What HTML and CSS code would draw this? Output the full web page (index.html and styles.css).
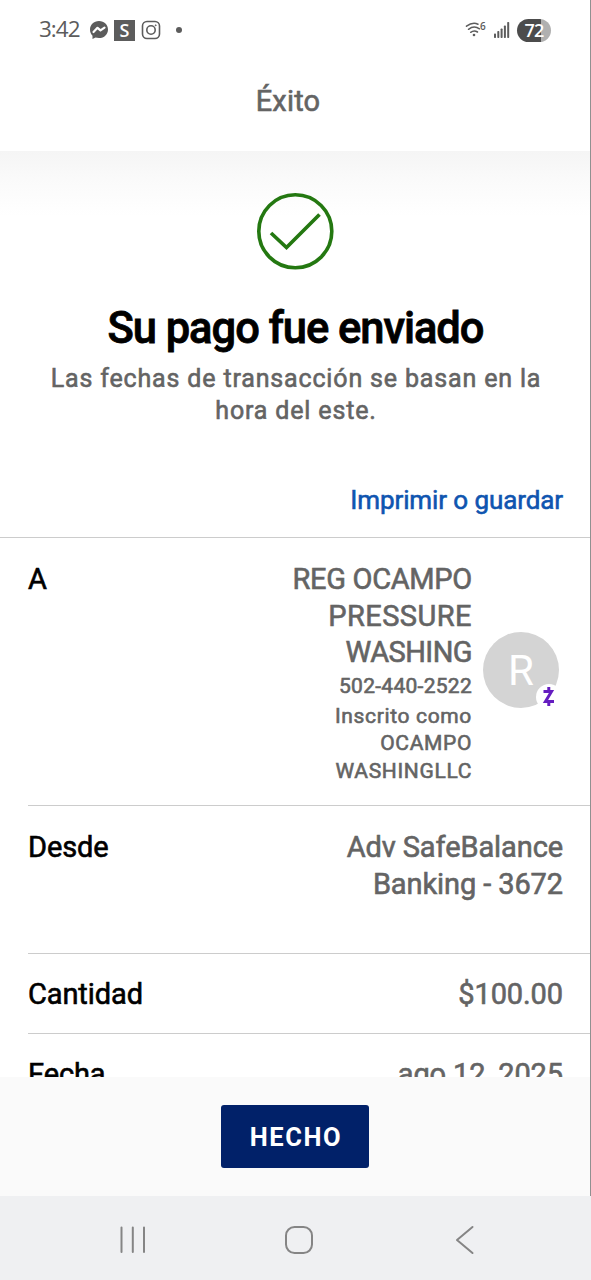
FILE: index.html
```html
<!DOCTYPE html>
<html lang="es">
<head>
<meta charset="utf-8">
<title>Éxito</title>
<link rel="stylesheet" href="styles.css">
</head>
<body>
<div class="screen">
  <header class="top">
    <div class="status">
      <span class="clock">3:42</span>
      <svg class="messenger" width="20" height="20" viewBox="0 0 20 20"><path d="M10 1C4.700 1 1 4.700 1 9.500c0 2.700 1 4.800 2.500 6.300V19l3-1.400c1 .3 2.200.5 3.500.5 5.300 0 9-3.800 9-8.600S15.300 1 10 1z" fill="#5c5c5c"/><path d="M4.500 12l4-4.200 3 2.600 4-2.800" fill="none" stroke="#fff" stroke-width="2.200" stroke-linejoin="round" stroke-linecap="round"/></svg>
      <span class="s-badge">S</span>
      <svg class="insta" width="20" height="20" viewBox="0 0 20 20" fill="none" stroke="#5c5c5c" stroke-width="1.600"><rect x="1.500" y="1.500" width="17" height="17" rx="4.500"/><circle cx="10" cy="10" r="4.200"/><circle cx="14.700" cy="5.300" r=".6" fill="#5c5c5c" stroke-width=".6"/></svg>
      <span class="dot"></span>
      <svg class="wifi" width="22" height="18" viewBox="0 0 22 18"><g fill="none" stroke="#5c5c5c" stroke-width="1.500" stroke-linecap="round"><path d="M1.500 5.200Q7.500 .8 13 3.200"/><path d="M3.500 8.300Q9 4 14.500 7.800"/><path d="M5.700 11.300Q9 8.700 12.500 11"/></g><circle cx="9" cy="14" r="1.300" fill="#5c5c5c"/></svg>
      <span class="wifi-gen">6</span>
      <svg class="signal" width="17" height="18" viewBox="0 0 17 18" fill="#5c5c5c"><rect x="0" y="12.500" width="2" height="4.500" rx=".7"/><rect x="3.300" y="10" width="2" height="7" rx=".7"/><rect x="6.600" y="7.500" width="2" height="9.500" rx=".7"/><rect x="9.900" y="4.500" width="2" height="12.500" rx=".7"/><rect x="13.200" y="1" width="2" height="16" rx=".7"/></svg>
      <span class="battery">72</span>
    </div>
    <h1 class="title">Éxito</h1>
  </header>
  <main class="content">
    <section class="summary">
      <svg class="check" width="78" height="78" viewBox="0 0 78 78" fill="none" stroke="#247811"><circle cx="39.300" cy="39.300" r="36.500" stroke-width="3.600"/><path d="M15 41L30.500 55.500L63.500 22.500" stroke-width="3.700"/></svg>
      <h2 class="heading">Su pago fue enviado</h2>
      <p class="note">Las fechas de transacción se basan en la<br>hora del este.</p>
      <a class="print">Imprimir o guardar</a>
    </section>
    <section class="row row-to">
      <span class="label">A</span>
      <div class="payee">
        <div class="name"><span class="tight">REG OCAMPO</span><br><span class="wide">PRESSURE</span><br><span class="tighter">WASHING</span></div>
        <div class="phone">502-440-2522</div>
        <div class="alias">Inscrito como<br>OCAMPO<br>WASHINGLLC</div>
      </div>
      <div class="avatar">R
        <span class="zelle"><svg width="26" height="26" viewBox="0 0 26 26" fill="none" stroke="#651dc0"><path d="M7.500 7.500H15.500L9.500 17.500H18" stroke-width="3"/><path d="M12.800 3V8M12.800 17V22" stroke-width="3"/></svg></span>
      </div>
    </section>
    <section class="row row-from"><span class="label">Desde</span><span class="value">Adv SafeBalance<br>Banking - 3672</span></section>
    <section class="row row-amount"><span class="label">Cantidad</span><span class="value">$100.00</span></section>
    <section class="row row-date"><span class="label">Fecha</span><span class="value">ago 12, 2025</span></section>
  </main>
  <footer class="actions"><button class="done">HECHO</button></footer>
  <nav class="nav">
    <svg width="28" height="28" viewBox="0 0 28 28"><path d="M2.500 1.500V26M13.800 1.500V26M25 1.500V26"/></svg>
    <svg width="30" height="30" viewBox="0 0 30 30"><rect x="2" y="2" width="26" height="26" rx="8.500"/></svg>
    <svg width="20" height="30" viewBox="0 0 20 30"><path d="M17.500 2L2 15L17.500 28"/></svg>
  </nav>
</div>
</body>
</html>
```
FILE: styles.css
```css
* { box-sizing: border-box; }
body { margin: 0; background: #fff; font-family: Roboto, sans-serif; font-weight: 400; color: #646464; }
h1, h2, p { margin: 0; }
svg { display: block; flex: none; }
.screen { width: 591px; height: 1280px; display: flex; flex-direction: column; overflow: hidden; background: linear-gradient(#909090, #909090) right top / 1px 1196px no-repeat; }
.top { height: 151px; flex: none; }
.status { height: 60px; display: flex; align-items: center; padding: 0 40px 0 39px; }
.clock { font: 400 22.500px/58px "Open Sans", sans-serif; height: 60px; letter-spacing: -1px; width: 50px; color: #5c5c5c; }
.s-badge { width: 21px; height: 21px; background: #5c5c5c; color: #fff; font: 600 18px/21px "Open Sans", sans-serif; text-align: center; margin: 0 6px 0 5px; }
.dot { width: 6px; height: 6px; border-radius: 50%; background: #5c5c5c; margin-left: 15px; }
.wifi { margin-left: auto; }
.wifi-gen { font: 600 10px/14px "Open Sans", sans-serif; color: #5c5c5c; width: 6px; margin: -8px 0 0 -7px; }
.signal { margin: 0 6px 0 8px; }
.battery { width: 34px; height: 23px; border-radius: 12px; background: linear-gradient(90deg, #4c4c4c 72%, #b0b0b0 72%); color: #fff; font: 600 18px/22px "Open Sans", sans-serif; letter-spacing: -0.7px; text-align: center; }
.title, .note, .print, .payee, .row .label, .value { -webkit-text-stroke: .6px currentColor; }
.title { font-size: 29px; font-weight: 400; line-height: 40px; padding-top: 21px; text-align: center; margin-right: 15px; letter-spacing: .2px; }
.content { height: 926px; flex: none; overflow: hidden; margin-right: 1px; background: linear-gradient(#f5f5f5, #fafafa 28px, #fff 65px) top / 100% 65px no-repeat; }
.summary { height: 386px; padding-top: 41px; display: flex; flex-direction: column; align-items: center; }
.heading { font-size: 43.500px; line-height: 52px; margin: 33px 0 0 1px; color: #000; font-weight: 500; -webkit-text-stroke: .8px #000; letter-spacing: -1.05px; white-space: nowrap; }
.note { font-size: 25px; line-height: 32px; margin-top: 8px; text-align: center; letter-spacing: .84px; margin-left: 2px; white-space: nowrap; }
.print { align-self: flex-end; margin: 57px 27px 0 0; color: #0f55b0; font-size: 26px; line-height: 32px; letter-spacing: -0.1px; }
.row { display: flex; justify-content: space-between; margin-left: 28px; padding: 22px 27px 0 0; border-top: 1px solid #ccc; font-size: 29px; line-height: 37px; letter-spacing: -0.1px; }
.label { color: #000; }
.value { text-align: right; }
.row-to { height: 268px; margin-left: 0; padding: 23px 27px 0 28px; }
.row-from { height: 148px; padding-top: 23px; }
.row-amount { height: 80px; }
.payee { margin-left: auto; text-align: right; }
.name { line-height: 36.700px; }
.tight { letter-spacing: -0.3px; }
.wide { letter-spacing: .45px; }
.tighter { letter-spacing: -0.55px; }
.phone { font-size: 21px; line-height: 31px; letter-spacing: .28px; }
.alias { font-size: 21px; line-height: 27.300px; margin-top: 1px; letter-spacing: .65px; }
.avatar { position: relative; width: 76px; height: 76px; margin: 71px 4px 0 11px; border-radius: 50%; background: #d4d4d4; color: #fff; font-size: 42px; line-height: 78px; text-align: center; }
.zelle { position: absolute; right: -3px; bottom: -2px; width: 26px; height: 26px; border-radius: 50%; background: #fff; }
.actions { height: 119px; flex: none; margin-right: 1px; background: #fafafa; padding-top: 28px; text-align: center; }
.done { width: 148px; height: 63px; border: 0; border-radius: 3px; background: #012169; color: #fff; font: 700 25.500px Roboto, sans-serif; letter-spacing: 1.600px; padding: 1px 0 0 2px; }
.nav { height: 84px; background: #eff0f2; display: flex; justify-content: space-between; align-items: center; padding: 4px 116px 0 119px; }
.nav svg { fill: none; stroke: #858585; stroke-width: 2; stroke-linecap: round; stroke-linejoin: round; }
.nav svg:nth-child(2) { margin-right: 5px; }
```
